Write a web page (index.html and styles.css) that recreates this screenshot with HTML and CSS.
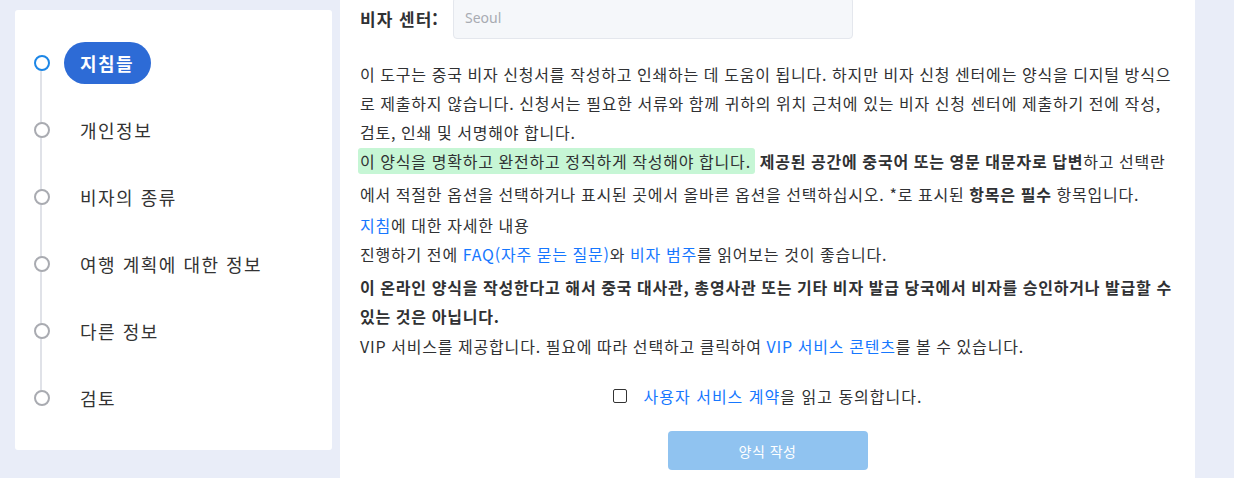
FILE: index.html
```html
<!DOCTYPE html>
<html lang="ko">
<head>
<meta charset="utf-8">
<title>비자 신청서</title>
<link rel="stylesheet" href="styles.css">
</head>
<body>
<div class="page">
  <aside class="sidebar">
    <ul class="steps">
      <li class="step active"><span class="dot"></span><span class="label">지침들</span></li>
      <li class="step"><span class="dot"></span><span class="label">개인정보</span></li>
      <li class="step"><span class="dot"></span><span class="label">비자의 종류</span></li>
      <li class="step"><span class="dot"></span><span class="label">여행 계획에 대한 정보</span></li>
      <li class="step"><span class="dot"></span><span class="label">다른 정보</span></li>
      <li class="step"><span class="dot"></span><span class="label">검토</span></li>
    </ul>
  </aside>
  <main class="main">
    <div class="field">
      <label class="field-label">비자 센터:</label>
      <div class="input">Seoul</div>
    </div>
    <div class="intro">
      <p class="p1">이 도구는 중국 비자 신청서를 작성하고 인쇄하는 데 도움이 됩니다. 하지만 비자 신청 센터에는 양식을 디지털 방식으로 제출하지 않습니다. 신청서는 필요한 서류와 함께 귀하의 위치 근처에 있는 비자 신청 센터에 제출하기 전에 작성, 검토, 인쇄 및 서명해야 합니다.</p>
      <p class="p2"><span class="mark">이 양식을 명확하고 완전하고 정직하게 작성해야 합니다.</span> <b>제공된 공간에 중국어 또는 영문 대문자로 답변</b>하고 선택란에서 적절한 옵션을 선택하거나 표시된 곳에서 올바른 옵션을 선택하십시오. *로 표시된 <b>항목은 필수</b> 항목입니다.</p>
      <p class="p3"><a class="link">지침</a>에 대한 자세한 내용</p>
      <p class="p4">진행하기 전에 <a class="link">FAQ(자주 묻는 질문)</a>와 <a class="link">비자 범주</a>를 읽어보는 것이 좋습니다.</p>
      <p class="p5"><b>이 온라인 양식을 작성한다고 해서 중국 대사관, 총영사관 또는 기타 비자 발급 당국에서 비자를 승인하거나 발급할 수 있는 것은 아닙니다.</b></p>
      <p class="p6">VIP 서비스를 제공합니다. 필요에 따라 선택하고 클릭하여 <a class="link">VIP 서비스 콘텐츠</a>를 볼 수 있습니다.</p>
    </div>
    <div class="agree">
      <span class="checkbox"></span>
      <span class="agree-text"><a class="link">사용자 서비스 계약</a>을 읽고 동의합니다.</span>
    </div>
    <div class="actions">
      <button class="btn" type="button">양식 작성</button>
    </div>
  </main>
</div>
</body>
</html>
```
FILE: styles.css
```css
* { box-sizing: border-box; }
html, body { margin: 0; padding: 0; }
body {
  background: #e9edf8;
  font-family: "Noto Sans CJK KR", "Noto Sans", sans-serif;
  color: #303133;
  height: 478px;
  overflow: hidden;
}
.page {
  display: flex;
  align-items: flex-start;
  padding-left: 15px;
  gap: 8px;
}
.sidebar {
  width: 317px;
  height: 440px;
  margin-top: 10px;
  background: #fff;
  border-radius: 3px;
  padding-top: 19px;
}
.steps {
  list-style: none;
  margin: 0;
  padding: 0;
  position: relative;
}
.steps::before {
  content: "";
  position: absolute;
  left: 25px;
  top: 33px;
  height: 334px;
  width: 2px;
  background: #e0e2e8;
}
.step {
  height: 67px;
  display: flex;
  align-items: center;
  padding-left: 19px;
  position: relative;
}
.dot {
  width: 16px;
  height: 16px;
  border-radius: 50%;
  border: 2px solid #a9abb1;
  background: #fff;
  position: relative;
  z-index: 1;
  flex: none;
}
.label {
  margin-left: 14px;
  padding: 0 16px;
  height: 42px;
  line-height: 42px;
  font-size: 18px;
  letter-spacing: 1.5px;
  color: #333;
  border-radius: 21px;
  white-space: nowrap;
}
.step.active .dot { border-color: #1c86e6; }
.step.active .label {
  background: #2d6bd6;
  color: #fff;
  font-weight: 700;
  padding-right: 17px;
}
.main {
  width: 855px;
  min-height: 478px;
  background: #fff;
  padding: 0 20px;
}
.field {
  display: flex;
  align-items: center;
  margin-top: -3px;
  height: 42px;
}
.field-label {
  width: 93px;
  font-size: 17px;
  letter-spacing: 1px;
  font-weight: 700;
  color: #303133;
}
.input {
  width: 400px;
  height: 42px;
  background: #f5f7fa;
  border: 1px solid #e4e7ed;
  border-radius: 4px;
  padding-left: 11px;
  line-height: 40px;
  font-size: 14px;
  color: #a8abb2;
  font-family: "Noto Sans", sans-serif;
}
.intro {
  margin-top: 21px;
  font-size: 16px;
  letter-spacing: 0.8px;
  word-spacing: -0.5px;
  line-height: 29px;
}
.intro p { margin: 0; }
.intro .p2 { margin-top: -2px; line-height: 33px; }
.intro .p5 { margin-top: 4px; }
.intro .p6 { margin-top: 1px; }
.mark {
  background: #c6f6d5;
  border-radius: 3px;
  padding: 1px 4px 1px 2px;
  margin-left: -2px;
}
b { font-weight: 700; }
.link { color: #1677ff; text-decoration: none; }
.agree {
  display: flex;
  justify-content: center;
  align-items: center;
  margin-top: 24px;
  font-size: 16px;
  letter-spacing: 1px;
  line-height: 22px;
}
.checkbox {
  width: 14px;
  height: 14px;
  border: 1.5px solid #333;
  border-radius: 2px;
  margin-right: 17px;
}
.actions {
  display: flex;
  justify-content: center;
  margin-top: 24px;
}
.btn {
  width: 200px;
  height: 39px;
  border: none;
  border-radius: 4px;
  background: #90c3f0;
  color: #fff;
  font-family: "Noto Sans CJK KR", sans-serif;
  font-size: 14px;
  letter-spacing: 0.5px;
}
```
